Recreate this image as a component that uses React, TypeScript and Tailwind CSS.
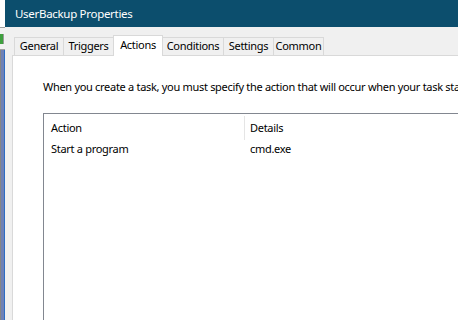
export default function App() {
  return (
    <div className="w-[458px] h-[320px] overflow-hidden flex bg-white font-['Noto_Sans',sans-serif] text-[11px] tracking-[-0.3px] text-black">
      <div className="w-[5px] shrink-0 flex flex-col">
        <div className="h-[27px] bg-white" />
        <div className="h-[23px] bg-[#f2f2f2] border-y border-[#a0a0a0] flex items-center">
          <div className="w-[4px] h-[10px] bg-[#3fa03f] border-r border-[#9a9a9a]" />
        </div>
        <div className="flex-1 flex">
          <div className="w-px bg-[#858585]" />
          <div className="w-[3px] bg-[#6e81b6]" />
          <div className="w-px bg-[#2b6cc4]" />
        </div>
      </div>
      <div className="flex-1 min-w-0 flex flex-col">
        <div className="h-[27px] shrink-0 bg-[#0c4e6d] text-white pl-[10px] flex items-center text-[11.5px]">
          UserBackup Properties
        </div>
        <div className="flex-1 bg-[#f0f0f0] pl-[7px] pt-[8px] flex flex-col min-h-0">
          <div className="ml-[2px] flex items-end h-[21px] mb-[-1px] relative z-10 whitespace-nowrap">
            <div className="w-[49px] h-[19px] border-t border-l border-b border-[#d9d9d9] flex items-center justify-center">General</div>
            <div className="w-[50px] h-[19px] border-t border-l border-b border-[#d9d9d9] flex items-center justify-center">Triggers</div>
            <div className="w-[50px] h-[21px] bg-white border-t border-l border-r border-[#d9d9d9] flex items-center justify-center pb-[1px]">Actions</div>
            <div className="w-[60px] h-[19px] border-t border-b border-[#d9d9d9] flex items-center justify-center">Conditions</div>
            <div className="w-[50px] h-[19px] border-t border-l border-b border-[#d9d9d9] flex items-center justify-center">Settings</div>
            <div className="w-[51px] h-[19px] border-t border-l border-r border-b border-[#d9d9d9] flex items-center justify-center">Common</div>
          </div>
          <div className="flex-1 bg-white border-t border-l border-[#d9d9d9] pl-[30px] pt-[23px] flex flex-col min-h-0">
            <div className="h-[16px] leading-[16px] whitespace-nowrap">
              When you create a task, you must specify the action that will occur when your task starts.
            </div>
            <div className="mt-[18px] flex-1 border-t border-l border-[#828790] flex flex-col">
              <div className="h-[26px] pt-[2px] flex">
                <div className="w-[200px] pl-[7px] flex items-center">Action</div>
                <div className="flex-1 pl-[5px] border-l border-[#e5e5e5] flex items-center">Details</div>
              </div>
              <div className="h-[19px] flex items-center">
                <div className="w-[200px] pl-[7px]">Start a program</div>
                <div className="flex-1 pl-[6px]">cmd.exe</div>
              </div>
            </div>
          </div>
        </div>
      </div>
    </div>
  );
}
